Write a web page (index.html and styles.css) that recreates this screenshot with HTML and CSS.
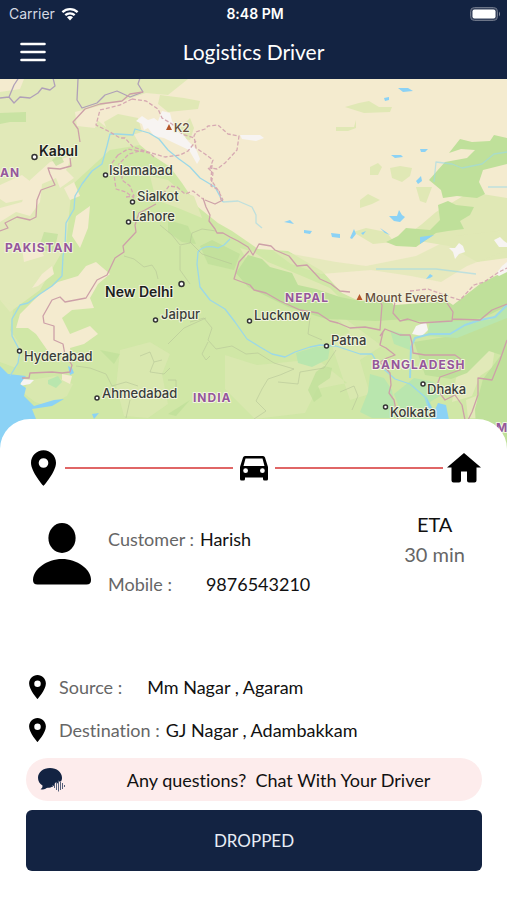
FILE: index.html
```html
<!DOCTYPE html>
<html lang="en">
<head>
    <meta charset="UTF-8">
    <meta name="viewport" content="width=device-width, initial-scale=1">
    <title>Logistics Driver</title>
    <link rel="stylesheet" href="styles.css">
</head>
<body>
<svg width="0" height="0" class="defs" aria-hidden="true">
    <symbol id="pin" viewBox="5 2 14 20">
        <path d="M12 2C8.13 2 5 5.13 5 9c0 5.25 7 13 7 13s7-7.75 7-13c0-3.87-3.13-7-7-7zm0 9.9a2.7 2.7 0 1 1 0-5.4 2.7 2.7 0 0 1 0 5.4z"/>
    </symbol>
</svg>
<header class="header">
    <div class="status">
        <div class="carrier">
            <span>Carrier</span>
            <svg class="wifi" viewBox="0 0 18 14">
                <path d="M1.4 5.1a11 11 0 0 1 15.2 0M4.3 8.1a7 7 0 0 1 9.4 0" fill="none" stroke="#fff" stroke-width="2.3"/>
                <path d="M9 13.5l-3-3.2a4.2 4.2 0 0 1 6 0z" fill="#fff"/>
            </svg>
        </div>
        <time class="clock">8:48 PM</time>
        <svg class="battery" viewBox="0 0 31 14">
            <rect x="0.5" y="0.5" width="27" height="13" rx="4" fill="#38445e" stroke="#6c7588"/>
            <rect x="2.5" y="2.5" width="23" height="9" rx="2" fill="#fff"/>
            <path d="M29 4.5q2 2.500 0 5z" fill="#8991a1"/>
        </svg>
    </div>
    <nav class="nav">
        <button class="menu" type="button" aria-label="Menu">
            <svg viewBox="0 0 26 20">
                <path d="M1.500 2h23M1.500 10h23M1.500 18h23" stroke="#fff" stroke-width="2.600" stroke-linecap="round"/>
            </svg>
        </button>
        <h1 class="title">Logistics Driver</h1>
    </nav>
</header>

<main>
    <svg class="map" viewBox="0 79 507 370" role="img" aria-label="Map">
        <rect y="79" width="507" height="370" fill="#d0e7a6"/>

        <!-- dry land -->
        <g fill="#e1e9b8">
            <path d="M0 79H190L170 140 110 150 72 185 66 245 40 290 10 312 0 300z"/>
            <path d="M0 300l14 6-4 24 14 20-8 18-16-6zM22 392l8-12 25-4 18 8-6 12-20 10-12-4zM320 300l30 32-20 8 20 60 20-6-10-34 22-14zM120 350l30-8 20 12-8 20 6 30-20 14-24-2-8-30zM225 355l32 10 60-6 30 24-30 6-12 24-50 6-30-30z" opacity=".5"/>
            <path d="M470 340l14 2 14-14-6 40-12 8-8 20-20 6 4-24 8-8zM466 400l10-4 6 22h-14z"/>
        </g>
        <g fill="#f4ebcf">
            <path d="M0 79h24l-4 10-20 3zM75 112l40-10 24 4-38 6-6 16-18-2zM72 156l-6 14 8 8-14 10-4-10-14 6-2 18-10 14-14-4-16 10v-14l22-6 8-22 20-18zM0 185l22-10 18 14-14 10-20 4-6-4zM76 216l14-10-2 22-8 20-8-12zM64 188l10-6 6 14-10 4zM22 248l14-6 8 14-20 6z"/>
            <path d="M86 266l10-4 14 12-12 10-8 14 4 10-22 2-10 8 8 16 20-8 8 8-14 10-14 4 2 10-22-4-14-20-8-6-12 0 4-14 12-12 8-8 18-12 20-6zM32 288l10-14 10-8 2 8-16 12zM62 374l10 2-2 8-8-4z"/>
            <path d="M507 79H188l-20 16-22-2-24 8-20 8-6 10 10 8 26 4 8 14 12 10 18 12 12 16 16 24 20 16 14 8 26 18 30 2 34 20 20 22 30 14 110-2 34-26 30-26 20-8z"/>
        </g>
        <g fill="#e0e8b5">
            <path d="M160 95l24 3 16 3-2 8-30 3-10-8zM180 128l10-10 4 10-4 12-12-2zM345 107l14-4 10-2 10 6h13l-2 5-26 1zM336 127l18 0 2-7v8l-8 3h-12zM370 167l8-4 4 4-4 8-8 0zM390 168l10-2 12 2-2 8-8 6-10-4zM416 187h16l-6 16-6-2zM360 200l8-6 12 6-8 4-12 4zM366 228l20 4 10 12 26-20 14-12 34-20 37 6v60l-30 4-28-16-36-6-40 4-20-12z"/>
            <path d="M240 248l14 4 14 10 34 14 28 12 10 10-26-2-30-12-30-12zM104 122l14-8 20 4 4 14-20 6-14-6zM150 176l18 4 14 12 12 4 8 22-24-10-22-8z"/>
            <path d="M272 250l20 4 44 8 30 4 50-10 40-20 51-6v20l-40 16-26 16-30-6-40-6-50 4-30-10z" opacity=".7"/>
        </g>
        <g fill="#bfe09a">
            <path d="M460 139l12 3 18-1 4-6 13 3v26l-24 6-4 12 6 12-8 4-20-2-14 2-2-8-12-10 16-18 22-4 8-8-14-1-12 4zM438 205l10-4 8 4 18 2-4 8-10 6 4 8-16 2-12 2-20 14-20-1-10-4 12-6 8-8 24 2 10-10z"/>
            <path d="M248 255l14 4 8 8 22 6 6 12 18 4 24 8 20 4 24-2 8 4 14 16-30 2-50-2-38-12-40-20-12-14z"/>
            <path d="M395 305l52-4 6 4 27-21 27-14v36l-24 12-30 4-48-1-12-8zM414 342l50-8 43-20v135h-30l-2-40 8-30 18-24-12-4-22 22-16 6-26-4z"/>
            <path d="M316 372l8-6 8 2-2 10-12 8 4 10-8 6-6-12zM200 246l12-6 28 14-6 16-26-6zM168 220l20 6 8 18-14-2-14-10zM190 400l-14 16-8-2z" opacity=".8"/>
            <path d="M0 113l26-1v10l-16 0-10 2zM38 250l6-18 14 2-4 18zM52 160l8-6 4 8-8 4zM100 350l20 4-6 10z" opacity=".7"/>
        </g>
        <g fill="#b9e6ae">
            <path d="M296 353l20-6 14 0-2 12-16 8-14-4zM48 380l10-4 4 6-6 6-8-4zM370 374l14 4 8 12 4 28h-24l-12-6 8-20zM414 378l20 4 6 14-10 6 8 18h-34l-10-26zM390 330l20 6v14l-16-6zM430 322l60-2 17-16v14l-50 20-30-2z"/>
        </g>
        <g fill="#f7f4f2">
            <path d="M136 121l6-5 6 4 6-2 4 3 4-10 8 2 2 8 10 12 6 8 8 8 4 10-3 5-8-14-17-8-8-4-10-2-6-8-4 2-2-6zM240 135l20 0 4 3-8 3-14-2zM449 248l6 0 4-5 4 3 2 6-6 2-4 5-2-7zM416 326l10-4 2 8-6 6-10-2zM494 240l6-3 4 4 3 2v4h-8zM496 274l6-8 5-4v10l-8 4zM22 379l12 1-4 4-10 2z"/>
        </g>

        <!-- sea and lakes -->
        <g fill="#8bd2f5">
            <path d="M0 366l8 8 18 2-6 8 6 4-2 8 10 10 20-6 10-1-12 7-20 3 4 10v30H0zM68 366l4 2 2 5-4 2zM92 414l7-1-5 6zM426 396l8 16 4-9 8 2 4 20h-18z"/>
            <path d="M398 88l10 0 5 3-10 1zM384 98l5-1 0 3-4 1zM391 155l10 0 2 2-8 1zM420 149h8l-3 3-4 0zM416 181l5-5 1 5-4 3zM389 216l8 0 2-6 3 5 3 2-5 5-6-1zM284 222l6-2 4 4zM304 230l8 1-2 3-6-1zM331 233l9 1 0 4-8-1zM420 237l14-2-8 5-6 4zM350 238l4-9 2 5-4 5zM361 233l5-2-3 4zM380 228l6 4 4 3-5-2zM426 279l4-5 3 2-3 2z"/>
        </g>

        <!-- rivers -->
        <g class="river">
            <path d="M223 202l-8-15-15-9-10-11-11-8-11-9-9-11-10-6-7-2-7-2-2 6-16-1-7 0-3 12-5 18-10 7-10 13-7 12-1 13-8 14-1 23-2 10-1 20-10 10-12 8-12 9-8 2-8 14v17l8 15-2 12-8 13"/>
            <path d="M223 202l15-1 14 6 4 8 0 8 6 5" opacity=".6"/>
            <path d="M230 239l-6 6-6 3q-14-4-20 4l-1 12 3 23 10 13 15 9 10 13 12 17 13 8 12 7 13 3 10-5 15-5 10-2 16 1 24 8 12 0 6 10 17 15 15 5 15 13 7 22"/>
            <path d="M434 182l2-20 16 2 10 4 20-4 12-10 13-2M488 187h19M376 269h60l40 5" opacity=".6"/>
            <path d="M507 305l-12 12-15 3-15 5-15 9-20 0-15 4-4 9-1 31" stroke-width="2"/>
        </g>

        <!-- state lines -->
        <g class="state">
            <path d="M124 256l10 3 10 8 8-2 4 6 2 8M160 225l12 10 8 10 10-2 2-10 10-4 14 2M180 246l0 24 10 14M190 242l12 12 30 10M190 322l14-4 8 10-4 12 8 9 16-3 14 8 12-1 16 10 20 6-14 6-12 4-6 10-6 12 10 10-12 8M168 344l16-16 22-10M208 342l-6 12 4 6 4-4M76 366l14 2 16 6 6 12 14-4 12 4M130 400l-4 18M140 356l10-4 4 10 8-2M154 362l-4 10 14 2 6-6M336 350l-12 18-24 4-2 12-20-2M168 380h8v12M310 318l-2 16 14 6M340 392l14-6 4 10-6 14"/>
        </g>

        <!-- borders -->
        <g class="border">
            <path class="north" d="M0 98l9-1 5 6 6-6 10 1 8-5 4-5 8 2 5-4-2-8M9 97l5-12 4-6M78 79l-1 21 5 8 15-5 8-8 12-4 13 6 13-5-5-8 2-6"/>
            <path d="M143 92l-13 2-8 7-22 3-15 5-12 13 5 7 2 13M70 158l1 8-11 3-12-1 2 6 5 11-14 5-4 10-1 17-6 3-13-3-12 6 3 5-8 3"/>
            <path d="M156 204l-11 6-6 3-4 12 1 7-13 14 1 6-9 6-8 17-10 5-11 18-21 4-5-5-8 3-9 16 1 7 10 3v14l9 4 2 11 7 10-2 7-8 1-10-1-22 1-1 5h-7"/>
            <path d="M223 200l-8 4-10-4M203 198l3 9 4 8-1 6 6 8 2 4 6 0 7 4 8 4 10 6 5 8 6-11 12 2 4 4 14 6 8 10 10-1 13 14 11 5 9 7 10 1M249 251l-10 11-5 17 16 6 4 5 12 3 14 8 20 9 18 3 12 8 8 2 12 5 15-1 15 3 2-25-4-8"/>
            <path d="M395 302l-2 11 7 8 8-2 12 4 32-2 1-9-6-9M452 319l28 1 12-10 15-6M380 336l5-7 15 6 10 0 2 8 1 10 12 2h30l7 5-2 10-20 7-4 11 9 12 10-5 7 10 3 15M383 332l-3 13 6 3 9 7-8 3-7 4 10 11 1 12-2 8 5 7 4 20M507 340l-7 20-8 20-14-2v17l-6 17-4 8"/>
            <path class="disputed" d="M132 99l-12 6-20 5-4 15 14 7 10 6 5 0 8 9 12 4 20 6 15-2 8-4 8-10M132 99l14 2 12 8 4 9 10 6 10 10 12 4M118 155l-6 8 2 12 2 14 10 3 8 6M118 155l10-6 22 4 4 4M126 197l8-1-4-10-8-6 0-8-3-8 10-10 14-4M163 194l6-8 8 1 8 7 8-3 10 8"/>
            <path class="disputed" d="M196 132l9-3 3-3 10-1 10 9 11 2-2 14-12 13-8 6-7-1 3-8-8-6-9-6-2-12zM212 165l-1 15 7 10 5 10M208 168l5 5-2 13 8 4 2 10M410 291l18-2 16 6 16 5 14-15 10-3 15-10 8-4"/>
        </g>

        <!-- places -->
        <g class="dot">
            <circle cx="34.500" cy="157" r="2.500"/>
            <circle cx="105.500" cy="175" r="2"/>
            <circle cx="132.500" cy="202" r="2"/>
            <circle cx="128.500" cy="222" r="2"/>
            <circle cx="181.500" cy="284" r="2.500"/>
            <circle cx="155.500" cy="320" r="2"/>
            <circle cx="249.500" cy="321" r="2"/>
            <circle cx="326.500" cy="346" r="2"/>
            <circle cx="19.500" cy="351" r="2"/>
            <circle cx="97" cy="398" r="2"/>
            <circle cx="423" cy="384" r="2"/>
            <circle cx="385.500" cy="407" r="2"/>
        </g>
        <path d="M166 130l3-6 3 6zM356.500 300l3-6 3 6z" fill="#b5562a"/>
        <g class="place">
            <text class="capital" x="39" y="156">Kabul</text>
            <text class="capital" x="105" y="297">New Delhi</text>
            <text x="109" y="175">Islamabad</text>
            <text x="137" y="201">Sialkot</text>
            <text x="132" y="221">Lahore</text>
            <text x="161" y="319">Jaipur</text>
            <text x="254" y="320">Lucknow</text>
            <text x="331" y="345">Patna</text>
            <text x="24" y="361">Hyderabad</text>
            <text x="102" y="398">Ahmedabad</text>
            <text x="427" y="394">Dhaka</text>
            <text x="390" y="417">Kolkata</text>
            <text class="peak" x="174" y="132">K2</text>
            <text class="peak" x="365" y="302">Mount Everest</text>
            <text class="country" x="0" y="177">AN</text>
            <text class="country" x="5" y="252">PAKISTAN</text>
            <text class="country" x="285" y="302">NEPAL</text>
            <text class="country" x="193" y="402">INDIA</text>
            <text class="country" x="372" y="369">BANGLADESH</text>
            <text class="country" x="496" y="432">M</text>
        </g>
    </svg>

    <section class="sheet">
        <div class="progress">
            <svg class="progress-pin"><use href="#pin"/></svg>
            <span class="line"></span>
            <svg class="progress-car" viewBox="0 0 28 25">
                <path fill-rule="evenodd" d="M5 0h18q1.500 0 2 1.500L28 11v12q0 1.500-1.500 1.500h-2Q23 24.500 23 23v-1.500H5V23q0 1.500-1.500 1.500h-2Q0 24.500 0 23V11L3 1.500Q3.500 0 5 0zM5.500 2.500L3.500 10h21L22.500 2.500zM5.600 12.300a2.400 2.400 0 1 0 0 4.800 2.400 2.400 0 0 0 0-4.800zM22.400 12.300a2.400 2.400 0 1 0 0 4.800 2.400 2.400 0 0 0 0-4.800z"/>
            </svg>
            <span class="line"></span>
            <svg class="progress-home" viewBox="0 0 34 30">
                <path d="M17 0L34 14.500H29.500V27.500q0 2-2 2H22q-2 0-2-2V18.500H14V27.500q0 2-2 2H6.500q-2 0-2-2V14.500H0z"/>
            </svg>
        </div>

        <div class="customer">
            <svg class="avatar" viewBox="0 0 58 62">
                <ellipse cx="29" cy="15" rx="13.600" ry="15"/>
                <path d="M29 36C44 36 58 46 58 57q0 4.500-4.500 4.500H4.500Q0 61.500 0 57C0 46 14 36 29 36z"/>
            </svg>
            <dl class="details">
                <div class="row">
                    <dt>Customer :</dt>
                    <dd>Harish</dd>
                </div>
                <div class="row wide">
                    <dt>Mobile :</dt>
                    <dd>9876543210</dd>
                </div>
            </dl>
            <div class="eta">
                <div>ETA</div>
                <div class="eta-time">30 min</div>
            </div>
        </div>

        <dl class="route">
            <div class="row wide">
                <dt><svg class="route-pin"><use href="#pin"/></svg>Source :</dt>
                <dd>Mm Nagar , Agaram</dd>
            </div>
            <div class="row">
                <dt><svg class="route-pin"><use href="#pin"/></svg>Destination :</dt>
                <dd>GJ Nagar , Adambakkam</dd>
            </div>
        </dl>

        <button class="chat" type="button">
            <svg class="chat-icon" viewBox="0 0 27 24">
                <path d="M12 0c6.700 0 12 4.200 12 9.800 0 1.500-.3 2.500-1 3.700h-2.500l-1 2-2-1-2 3.500-3 1.500c-2 .3-3.500 0-5 1.200-1.500.9-3 .9-5 .5 2-1.200 2-2.400 2-3.700C1.500 15.700 0 13 0 9.800 0 4.200 5.300 0 12 0z" fill="#132342"/>
                <path d="M14.500 17v2M16.500 16v4M18.500 14v8M20.500 12.500v11M22.500 14v8M24.500 15v6M26.500 17v2" stroke="#56617a"/>
            </svg>
            <span class="chat-text">Any questions?&nbsp; Chat With Your Driver</span>
        </button>
        <button class="dropped" type="button">DROPPED</button>
    </section>
</main>
</body>
</html>
```

FILE: styles.css
```css
* {
    box-sizing: border-box;
}

body {
    margin: 0;
    background: #fff;
    color: #111;
    font-family: Lato, "Liberation Sans", sans-serif;
    font-size: 18px;
    line-height: 24px;
    font-variant-ligatures: none;
}

button {
    border: 0;
    padding: 0;
    font: inherit;
    color: inherit;
    cursor: pointer;
}

svg {
    display: block;
    flex: none;
}

.defs {
    position: absolute;
}

/* header */
.header {
    background: #132342;
    color: #fff;
}

.status {
    display: grid;
    grid-template-columns: 1fr auto 1fr;
    align-items: center;
    height: 27px;
    padding: 0 6px 0 9px;
    font-family: Inter, "Liberation Sans", sans-serif;
    font-size: 14px;
}

.carrier {
    display: flex;
    align-items: center;
    gap: 6px;
    color: #d5d9e2;
}

.wifi {
    width: 18px;
    height: 14px;
}

.clock {
    font-weight: 600;
}

.battery {
    width: 31px;
    height: 14px;
    justify-self: end;
}

.nav {
    display: grid;
    grid-template-columns: 1fr auto 1fr;
    align-items: center;
    height: 52px;
    padding: 0 20px 2px;
}

.menu {
    justify-self: start;
    background: none;
}

.menu svg {
    width: 26px;
    height: 20px;
}

.title {
    margin: 0;
    font-size: 21px;
    font-weight: 400;
}

/* map */
.map {
    width: 100%;
    height: auto;
    font-family: Inter, "Liberation Sans", sans-serif;
}

.river {
    fill: none;
    stroke: #9bd8e8;
    stroke-width: 1.3;
    stroke-linejoin: round;
}

.state {
    fill: none;
    stroke: #b5c497;
    stroke-width: 1;
    stroke-linejoin: round;
    opacity: .6;
}

.border {
    fill: none;
    stroke: #cda0a8;
    stroke-width: 1.3;
    stroke-linejoin: round;
}

.north {
    stroke: #b0a0b8;
}

.disputed {
    stroke: #d6a9b2;
    stroke-dasharray: 4 2;
}

.dot {
    fill: #fff;
    stroke: #333;
    stroke-width: 1.5;
}

.place {
    fill: #3a3d3a;
    stroke: #f2f5df;
    stroke-width: 2;
    stroke-linejoin: round;
    paint-order: stroke;
    font-size: 13px;
    font-weight: 500;
}

.capital {
    fill: #1d1f1d;
    font-size: 14px;
    font-weight: 600;
}

.peak {
    fill: #664c3c;
    font-size: 12px;
}

.country {
    fill: #95579b;
    font-size: 12px;
    font-weight: 700;
    letter-spacing: 1px;
}

/* bottom sheet */
.sheet {
    position: relative;
    margin-top: -30px;
    padding: 31px 25px 29px 26px;
    border-radius: 30px 30px 0 0;
    background: #fff;
}

.progress {
    display: flex;
    align-items: center;
    gap: 7px;
    height: 36px;
    padding: 0 1px 0 5px;
}

.progress-pin {
    width: 25px;
    height: 36px;
    margin-right: 2px;
}

.progress-car {
    width: 28px;
    height: 25px;
}

.progress-home {
    width: 34px;
    height: 30px;
    margin-left: -3px;
}

.line {
    flex: 1;
    height: 2px;
    background: #e06666;
}

.customer {
    display: flex;
    align-items: flex-start;
    height: 164px;
    margin-top: 23px;
    padding: 0 17px 0 7px;
}

.avatar {
    width: 58px;
    height: 62px;
    margin-top: 14px;
}

.details {
    display: grid;
    gap: 21px;
    margin: 18px 0 0 17px;
}

.row {
    display: flex;
    align-items: center;
    gap: 6px;
}

.wide {
    gap: 34px;
}

dt {
    display: flex;
    align-items: center;
    color: #666;
}

dd {
    margin: 0;
}

.eta {
    margin-left: auto;
    font-size: 20px;
    line-height: 30px;
    text-align: center;
}

.eta-time {
    color: #666;
}

.route {
    display: grid;
    gap: 19px;
    margin: 2px 0 0 3px;
}

.route .wide {
    gap: 25px;
}

.route-pin {
    width: 17px;
    height: 24px;
    margin-right: 13px;
}

.chat {
    display: flex;
    align-items: center;
    gap: 10px;
    width: 100%;
    height: 43px;
    margin-top: 16px;
    padding-left: 12px;
    border-radius: 22px;
    background: #fdecec;
}

.chat-icon {
    width: 27px;
    height: 24px;
}

.chat-text {
    flex: 1;
    text-align: center;
}

.dropped {
    width: 100%;
    height: 61px;
    margin-top: 9px;
    border-radius: 6px;
    background: #132342;
    color: #e8edf6;
    font-size: 17px;
}
```
